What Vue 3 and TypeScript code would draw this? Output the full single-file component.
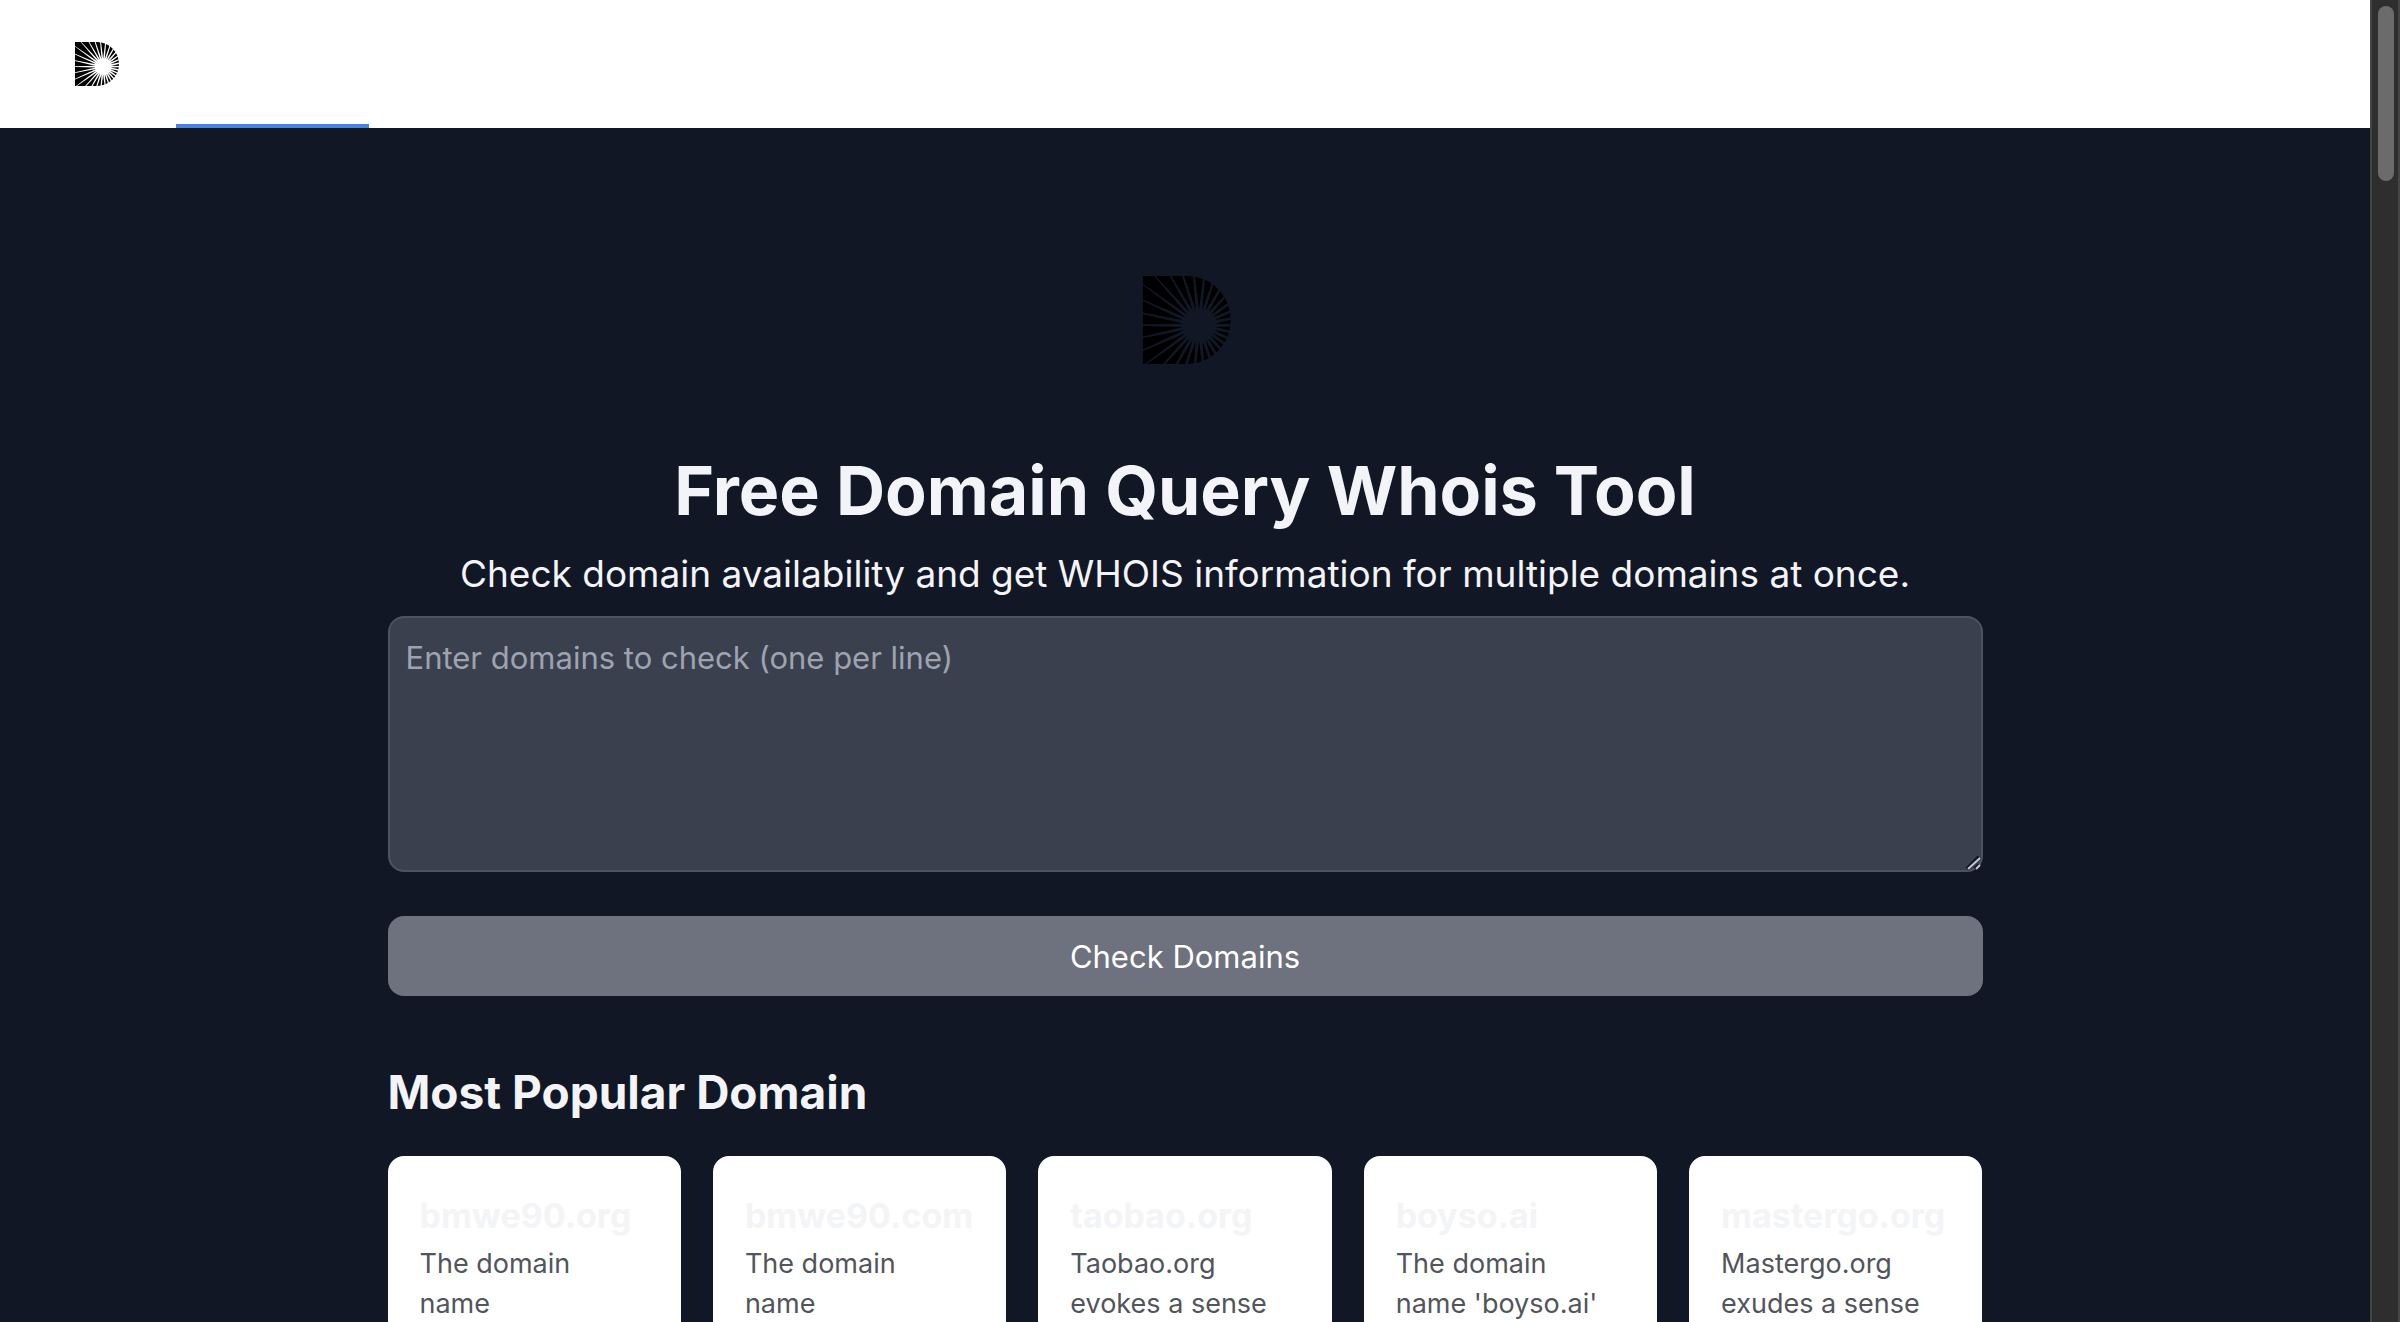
<script setup lang="ts">
import { ref } from 'vue'

interface DomainCard {
  name: string
  summary: string
}

const domains = ref('')

const cards: DomainCard[] = [
  { name: 'bmwe90.org', summary: 'The domain\nname' },
  { name: 'bmwe90.com', summary: 'The domain\nname' },
  { name: 'taobao.org', summary: 'Taobao.org\nevokes a sense' },
  { name: 'boyso.ai', summary: "The domain\nname 'boyso.ai'" },
  { name: 'mastergo.org', summary: 'Mastergo.org\nexudes a sense' },
]

// The logo is a D with 30 tapered rays cut out around an off-centre hole.
const rays: number[] = Array.from({ length: 30 }, (_, i) => i * 12)
</script>

<template>
  <div class="window">
    <div class="page">
      <header class="topbar">
        <a class="brand" href="#" aria-label="Home">
          <svg class="brand-logo" viewBox="0 0 100 100" aria-hidden="true">
            <defs>
              <mask id="burst">
                <rect width="100" height="100" fill="#fff" />
                <circle cx="64" cy="56" r="19" fill="#000" />
                <polygon
                  v-for="a in rays"
                  :key="a"
                  points="17,-1.9 90,-0.3 90,0.3 17,1.9"
                  fill="#000"
                  :transform="`translate(64 56) rotate(${a})`"
                />
              </mask>
            </defs>
            <path d="M0 0H50A50 50 0 0 1 50 100H0Z" mask="url(#burst)" />
          </svg>
        </a>
        <nav class="tabs">
          <a class="tab" href="#" aria-label="Domains" aria-current="page"></a>
        </nav>
      </header>

      <main class="content">
        <svg class="hero-logo" viewBox="-4 0 104 100" aria-hidden="true">
          <path d="M0 0H50A50 50 0 0 1 50 100H0Z" mask="url(#burst)" />
        </svg>
        <h1>Free Domain Query Whois Tool</h1>
        <p class="lead">
          Check domain availability and get WHOIS information for multiple domains at once.
        </p>

        <form class="query" @submit.prevent>
          <div class="field">
            <textarea
              v-model="domains"
              aria-label="Domains"
              placeholder="Enter domains to check (one per line)"
            ></textarea>
            <svg class="grip" viewBox="0 0 16 16" aria-hidden="true">
              <path d="M1 14L13 2M9 14L13 10" stroke="#111724" stroke-width="4" />
              <path d="M2 14L14 3M10 14L14 10" stroke="#c3c8d2" stroke-width="2" />
            </svg>
          </div>
          <button type="submit">Check Domains</button>
        </form>

        <h2>Most Popular Domain</h2>
        <ul class="cards">
          <li v-for="card in cards" :key="card.name" class="card">
            <h3>{{ card.name }}</h3>
            <p>{{ card.summary }}</p>
          </li>
        </ul>
      </main>
    </div>
    <div class="scrollbar"><div class="thumb"></div></div>
  </div>
</template>

<style>
body {
  background: #111724;
}
</style>

<style scoped>
.window {
  display: flex;
  height: 100vh;
  overflow: hidden;
  font-family: Inter, 'Liberation Sans', sans-serif;
  color: #f3f4f8;
}
.page {
  flex: 1;
  min-width: 0;
  overflow: hidden;
  background: #111724;
}
.topbar {
  display: flex;
  align-items: stretch;
  gap: 57px;
  height: 128px;
  padding-left: 75px;
  background: #fff;
}
.brand {
  display: flex;
  align-items: center;
}
.brand-logo {
  width: 44px;
  height: 44px;
}
.tabs {
  display: flex;
}
.tab {
  box-sizing: border-box;
  width: 193px;
  border-bottom: 4px solid #4a82e4;
}
.content {
  box-sizing: border-box;
  max-width: 1595px;
  margin: 0 auto;
  padding-top: 148px;
}
.hero-logo {
  display: block;
  width: 92px;
  height: 88px;
  margin: 0 auto;
}
h1 {
  margin: 86px 0 0;
  font-size: 68px;
  line-height: 80px;
  font-weight: 700;
  text-align: center;
}
.lead {
  margin: 16px 0 0;
  font-size: 37px;
  line-height: 56px;
  text-align: center;
  white-space: nowrap;
}
.query {
  display: flex;
  flex-direction: column;
  gap: 44px;
  margin-top: 14px;
}
.field {
  position: relative;
  display: flex;
}
textarea {
  box-sizing: border-box;
  width: 100%;
  height: 256px;
  padding: 16px;
  border: 2px solid #4d535f;
  border-radius: 16px;
  background: #3b404e;
  color: #f3f4f8;
  font: inherit;
  font-size: 31px;
  line-height: 48px;
  resize: none;
}
textarea::placeholder {
  color: #9da3b0;
  opacity: 1;
}
.grip {
  position: absolute;
  right: 1px;
  bottom: 1px;
  width: 16px;
  height: 16px;
}
button {
  height: 80px;
  border: 0;
  border-radius: 16px;
  background: #6d727e;
  color: #fff;
  font: inherit;
  font-size: 31px;
}
h2 {
  margin: 64px 0 0;
  font-size: 46px;
  line-height: 64px;
  font-weight: 700;
}
.cards {
  display: grid;
  grid-template-columns: repeat(5, minmax(0, 1fr));
  gap: 32px;
  margin: 32px 0 0;
  padding: 0;
  list-style: none;
}
.card {
  padding: 32px 32px 96px;
  border-radius: 16px;
  background: #fff;
}
h3 {
  margin: 0;
  color: #f3f4f6;
  font-size: 34px;
  line-height: 56px;
  font-weight: 700;
  white-space: nowrap;
}
.card p {
  margin: 0;
  color: #52555b;
  font-size: 27px;
  line-height: 40px;
  white-space: pre;
}
.scrollbar {
  box-sizing: border-box;
  width: 30px;
  padding: 6px 4px 0 6px;
  border: solid #454545;
  border-width: 0 2px;
  background: #2e2e2e;
}
.thumb {
  width: 16px;
  height: 175px;
  border-radius: 8px;
  background: #6b6b6b;
}
</style>
